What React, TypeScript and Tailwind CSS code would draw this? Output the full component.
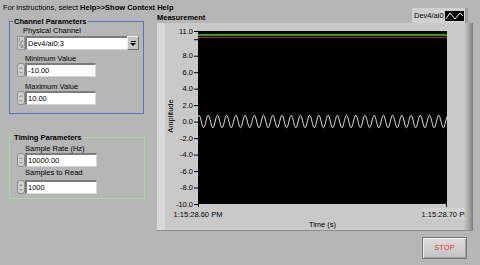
import React from "react";

const PLOT_X = 33;
const PLOT_Y = 8;
const PLOT_W = 249;
const PLOT_H = 173;

// map an amplitude value to a y inside the chart svg
const yOf = (v: number) => PLOT_Y + ((11 - v) * PLOT_H) / 21;

function wavePath() {
  const pts: string[] = [];
  const period = 9.22;
  const center = 98.5;
  for (let x = 0; x <= PLOT_W; x += 0.5) {
    const y = center - 6.2 * Math.cos((2 * Math.PI * (x - 1)) / period);
    pts.push(`${x === 0 ? "M" : "L"}${(PLOT_X + x).toFixed(1)},${y.toFixed(2)}`);
  }
  return pts.join(" ");
}

function Spinner() {
  return (
    <div className="w-[8px] h-[14px] shrink-0 rounded-[3px] border border-[#8e8e8e] bg-[#d0d0d0] flex flex-col items-center justify-center gap-[3px]">
      <div className="w-0 h-0 border-l-[2px] border-r-[2px] border-b-[2px] border-l-transparent border-r-transparent border-b-[#9a9a9a]" />
      <div className="w-0 h-0 border-l-[2px] border-r-[2px] border-t-[2px] border-l-transparent border-r-transparent border-t-[#9a9a9a]" />
    </div>
  );
}

function Numeric({ value, width }: { value: string; width: string }) {
  return (
    <div className="flex h-[14px]">
      <Spinner />
      <div
        className={`${width} h-[14px] bg-white border-t-2 border-l-2 border-b border-r border-t-[#7c7c7c] border-l-[#7c7c7c] border-b-[#d6d6d6] border-r-[#d6d6d6] pl-[1px] leading-[11px]`}
      >
        {value}
      </div>
    </div>
  );
}

function Group({
  title,
  className,
  children,
}: {
  title: string;
  className: string;
  children: React.ReactNode;
}) {
  return (
    <div className={`relative ml-[9px] border ${className}`}>
      <div className="absolute left-[3px] top-[-5px] px-[1px] bg-[#b6b6b6] font-bold whitespace-nowrap">
        {title}
      </div>
      {children}
    </div>
  );
}

function LeftColumn() {
  return (
    <div className="w-[157px] shrink-0 flex flex-col">
      <Group
        title="Channel Parameters"
        className="mt-[13px] w-[135px] h-[93px] border-[#5474c8] pl-[7px] pt-[4px]"
      >
        <div className="ml-[6px]">Physical Channel</div>
        <div className="mt-[1px] flex h-[14px] w-[122px]">
          <div className="w-[8px] h-[14px] bg-[#cdcdcd] border border-[#9a9a9a]">
            <svg width="6" height="12" viewBox="0 0 6 12">
              <text x="0.5" y="5" fontSize="5" fontFamily="Liberation Sans, Arial, sans-serif" fill="#444">I</text>
              <line x1="5" y1="3" x2="1" y2="9" stroke="#444" strokeWidth="0.6" />
              <text x="2.5" y="11" fontSize="5" fontFamily="Liberation Sans, Arial, sans-serif" fill="#444">o</text>
            </svg>
          </div>
          <div className="flex-1 h-[14px] bg-white border-t-2 border-l-2 border-b border-t-[#7c7c7c] border-l-[#7c7c7c] border-b-[#d6d6d6] pl-[1px] leading-[11px]">
            Dev4/ai0:3
          </div>
          <div className="w-[12px] h-[14px] bg-[#c4c4c4] border border-t-[#eeeeee] border-l-[#eeeeee] border-b-[#6c6c6c] border-r-[#6c6c6c] flex flex-col items-center justify-center gap-[1px]">
            <div className="w-[5px] h-[1px] bg-black" />
            <div className="w-0 h-0 border-l-[3px] border-r-[3px] border-t-[3px] border-l-transparent border-r-transparent border-t-black" />
          </div>
        </div>
        <div className="ml-[8px] mt-[4px]">Minimum Value</div>
        <Numeric value="-10.00" width="w-[71px]" />
        <div className="ml-[8px] mt-[5px]">Maximum Value</div>
        <Numeric value="10.00" width="w-[71px]" />
      </Group>

      <Group
        title="Timing Parameters"
        className="mt-[23px] w-[136px] h-[62px] border-[#9edb9e] pl-[7px] pt-[6px]"
      >
        <div className="ml-[8px]">Sample Rate (Hz)</div>
        <Numeric value="10000.00" width="w-[72px]" />
        <div className="ml-[8px] mt-[1px]">Samples to Read</div>
        <div className="mt-[3px]">
          <Numeric value="1000" width="w-[72px]" />
        </div>
      </Group>
    </div>
  );
}

function Chart() {
  const font = "Liberation Sans, Arial, sans-serif";
  const labels = [11, 8, 6, 4, 2, 0, -2, -4, -6, -8, -10];
  return (
    <svg width="300" height="206" className="shrink-0 overflow-visible">
      <text
        x="5"
        y="93"
        fontSize="7.5"
        fontFamily={font}
        textAnchor="middle"
        dominantBaseline="central"
        transform="rotate(-90 5 93)"
      >
        Amplitude
      </text>
      {labels.map((v) => (
        <g key={v}>
          <text
            x="28"
            y={yOf(v)}
            fontSize="7.5"
            fontFamily={font}
            textAnchor="end"
            dominantBaseline="central"
          >
            {v.toFixed(1)}
          </text>
          <line x1="29" x2="33" y1={yOf(v) + 0.5} y2={yOf(v) + 0.5} stroke="#000" strokeWidth="1" />
        </g>
      ))}
      <line x1="29" x2="33" y1={yOf(10) + 0.5} y2={yOf(10) + 0.5} stroke="#000" strokeWidth="1" />
      <rect x={PLOT_X} y={PLOT_Y} width={PLOT_W} height={PLOT_H} fill="#000" />
      <rect x={PLOT_X} y="11" width={PLOT_W} height="2" fill="#1aa41a" />
      <rect x={PLOT_X} y="14" width={PLOT_W} height="1" fill="#c81414" />
      <path d={wavePath()} fill="none" stroke="#e4e4e4" strokeWidth="1" />
      <line x1="33.5" x2="33.5" y1="181" y2="184" stroke="#000" />
      <line x1="281.5" x2="281.5" y1="181" y2="184" stroke="#000" />
      <rect x="258" y="185" width="46" height="11" fill="#d2d2d2" />
      <text x="33" y="194" fontSize="7.5" fontFamily={font} textAnchor="middle">
        1:15:28.60 PM
      </text>
      <text x="281" y="194" fontSize="7.5" fontFamily={font} textAnchor="middle">
        1:15:28.70 PM
      </text>
      <text x="157.5" y="204" fontSize="7.5" fontFamily={font} textAnchor="middle">
        Time (s)
      </text>
    </svg>
  );
}

function GraphColumn() {
  return (
    <div className="flex-1 flex flex-col">
      <div className="h-[15px] flex justify-between items-end">
        <div className="font-bold mb-[1px]">Measurement</div>
        <div className="h-[15px] w-[56px] mr-[12px] flex items-center gap-[1px] pl-[2px] bg-[#d0d0d0] border-r-[3px] border-r-[#9c9c9c]">
          <span>Dev4/ai0</span>
          <svg width="19" height="10" viewBox="0 0 19 10" className="shrink-0">
            <rect width="19" height="10" fill="#000" />
            <polyline points="1,8 5,2 10,8 15,2 18,5" fill="none" stroke="#fff" strokeWidth="1" />
          </svg>
        </div>
      </div>
      <div className="w-[316px] h-[208px] flex bg-[#c9c9c9] border-b border-b-[#8e8e8e]">
        <div className="w-[8px] bg-[#d9d9d9]" />
        <Chart />
        <div className="w-[8px] bg-gradient-to-r from-[#c2c2c2] via-[#a6a6a6] to-[#7e7e7e]" />
      </div>
      <button className="mt-[6px] self-end mr-[13px] w-[45px] h-[22px] border border-[#767676] bg-gradient-to-b from-[#dedede] to-[#c2c2c2] shadow-[inset_1px_1px_0_#f0f0f0,inset_-1px_-1px_0_#a0a0a0] text-[#e53535] text-[7.5px] leading-[20px] text-center">
        STOP
      </button>
    </div>
  );
}

export default function App() {
  return (
    <div className="w-[480px] h-[265px] bg-[#b6b6b6] overflow-hidden font-['Liberation_Sans',Arial,sans-serif] text-[7.5px] leading-[9px] text-black">
      <div className="h-[8px] pl-[3px] pt-[3px] whitespace-nowrap">
        For instructions, select <b>Help&gt;&gt;Show Context Help</b>
      </div>
      <div className="flex">
        <LeftColumn />
        <GraphColumn />
      </div>
    </div>
  );
}
